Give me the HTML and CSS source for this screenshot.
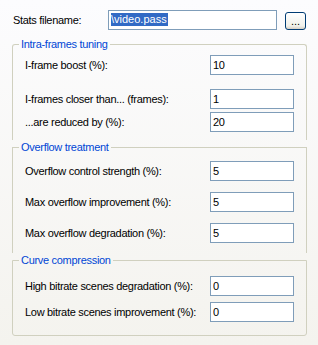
FILE: index.html
```html
<!DOCTYPE html>
<html>
<head>
    <title>Two-pass settings</title>
    <link rel="stylesheet" href="styles.css">
</head>
<body>
    <div class="file-row">
        <span class="file-label">Stats filename:</span>
        <div class="textbox"><span class="selected">\video.pass</span></div>
        <button class="browse">...</button>
    </div>

    <fieldset class="group group-first">
        <legend>Intra-frames tuning</legend>
        <div class="row">
            <label>I-frame boost (%):</label>
            <input class="num" type="text" value="10">
        </div>
        <div class="row gap-big">
            <label>I-frames closer than... (frames):</label>
            <input class="num" type="text" value="1">
        </div>
        <div class="row gap-small">
            <label>...are reduced by (%):</label>
            <input class="num" type="text" value="20">
        </div>
    </fieldset>

    <fieldset class="group group-mid">
        <legend>Overflow treatment</legend>
        <div class="row">
            <label>Overflow control strength (%):</label>
            <input class="num" type="text" value="5">
        </div>
        <div class="row gap-mid">
            <label>Max overflow improvement (%):</label>
            <input class="num" type="text" value="5">
        </div>
        <div class="row gap-mid">
            <label>Max overflow degradation (%):</label>
            <input class="num" type="text" value="5">
        </div>
    </fieldset>

    <fieldset class="group group-last">
        <legend>Curve compression</legend>
        <div class="row">
            <label>High bitrate scenes degradation (%):</label>
            <input class="num" type="text" value="0">
        </div>
        <div class="row gap-small2">
            <label>Low bitrate scenes improvement (%):</label>
            <input class="num" type="text" value="0">
        </div>
    </fieldset>
</body>
</html>
```

FILE: styles.css
```css
html, body {
    margin: 0;
    padding: 0;
    height: 100%;
}

body {
    font-family: 'Liberation Sans', Arial, sans-serif;
    font-size: 11px;
    letter-spacing: -0.3px;
    color: #000;
    background: linear-gradient(#fcfcfe, #f4f3ee);
    padding-top: 10px;
    box-sizing: border-box;
    overflow: hidden;
}

/* top row: stats file */
.file-row {
    display: flex;
    align-items: center;
    height: 20px;
    padding-left: 13px;
}

.file-label {
    width: 95px;
}

.textbox {
    width: 169px;
    height: 20px;
    box-sizing: border-box;
    border: 1px solid #7f9db9;
    background: #fff;
    padding: 2px 0 0 2px;
}

.selected {
    display: inline-block;
    background: #316ac5;
    color: #fff;
    line-height: 13px;
    letter-spacing: 0;
    padding-right: 1px;
}

.browse {
    margin-left: 8px;
    margin-top: 1px;
    width: 21px;
    height: 18px;
    padding: 0;
    border: 1px solid #003c74;
    border-radius: 3px;
    background: linear-gradient(#ffffff, #f0f0ea 80%, #d6d0c5);
    font-family: inherit;
    font-size: 11px;
    line-height: 14px;
    letter-spacing: 0;
    color: #000;
}

/* group boxes */
.group {
    margin: 7px 11px 0 12px;
    padding: 0 12px;
    border: 1px solid #d0d0bf;
    min-width: 0;
}

.group legend {
    margin-left: -6px;
    padding: 0 2px;
    color: #0046d5;
    line-height: 14px;
}

.group-first {
    border-bottom: none;
    border-radius: 3px 3px 0 0;
    padding-top: 4px;
    padding-bottom: 8px;
}

.group-mid {
    margin-top: 0;
    border-bottom: none;
    padding-top: 7px;
    padding-bottom: 10px;
}

.group-last {
    margin-top: 0;
    border-radius: 0 0 3px 3px;
    padding-top: 9px;
    padding-bottom: 13px;
}

.row {
    display: flex;
    align-items: center;
    justify-content: space-between;
    height: 20px;
}

.gap-big { margin-top: 14px; }
.gap-small { margin-top: 3px; }
.gap-mid { margin-top: 11px; }
.gap-small2 { margin-top: 6px; }

.num {
    width: 84px;
    height: 20px;
    box-sizing: border-box;
    margin: 0;
    border: 1px solid #7f9db9;
    padding: 0 2px;
    font-family: inherit;
    font-size: 11px;
    letter-spacing: -0.3px;
    color: #000;
    background: #fff;
    outline: none;
}
```
